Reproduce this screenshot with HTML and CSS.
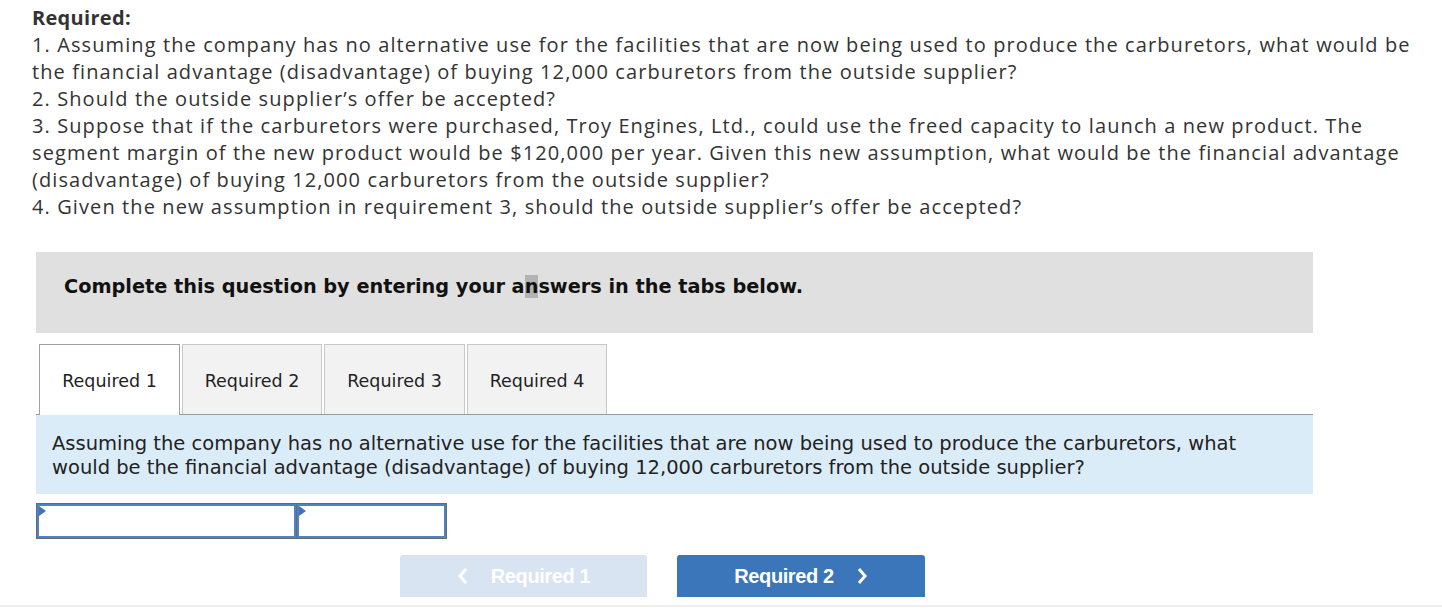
FILE: index.html
```html
<!DOCTYPE html>
<html>
<head>
<meta charset="utf-8">
<link rel="stylesheet" href="styles.css">
</head>
<body>
<div class="page">
  <div class="intro">
    <div class="req-title">Required:</div>
    <p class="req-text">1. Assuming the company has no alternative use for the facilities that are now being used to produce the carburetors, what would be<br>the financial advantage (disadvantage) of buying 12,000 carburetors from the outside supplier?<br>2. Should the outside supplier’s offer be accepted?<br>3. Suppose that if the carburetors were purchased, Troy Engines, Ltd., could use the freed capacity to launch a new product. The<br>segment margin of the new product would be $120,000 per year. Given this new assumption, what would be the financial advantage<br>(disadvantage) of buying 12,000 carburetors from the outside supplier?<br>4. Given the new assumption in requirement 3, should the outside supplier’s offer be accepted?</p>
  </div>

  <div class="instructions">Complete this question by entering your a<span class="sel">n</span>swers in the tabs below.</div>

  <div class="tabs">
    <div class="tab active">Required 1</div>
    <div class="tab">Required 2</div>
    <div class="tab">Required 3</div>
    <div class="tab">Required 4</div>
  </div>

  <div class="question">Assuming the company has no alternative use for the facilities that are now being used to produce the carburetors, what<br>would be the financial advantage (disadvantage) of buying 12,000 carburetors from the outside supplier?</div>

  <div class="answer-row">
    <div class="cell cell-wide"><span class="flag"></span></div>
    <div class="cell cell-narrow"><span class="flag"></span></div>
  </div>

  <div class="nav">
    <div class="btn btn-prev">
      <svg class="chev" width="12" height="18" viewBox="0 0 12 18"><path d="M9 2 L3 9 L9 16" fill="none" stroke="#ffffff" stroke-width="3"/></svg>
      <span>Required 1</span>
    </div>
    <div class="btn btn-next">
      <span>Required 2</span>
      <svg class="chev" width="12" height="18" viewBox="0 0 12 18"><path d="M3 2 L9 9 L3 16" fill="none" stroke="#ffffff" stroke-width="3"/></svg>
    </div>
  </div>
  <div class="footer-line"></div>
</div>
</body>
</html>
```
FILE: styles.css
```css
html, body {
  margin: 0;
  padding: 0;
  background: #ffffff;
}
.page {
  width: 1442px;
  height: 612px;
  overflow: hidden;
}
.intro {
  padding: 4px 0 0 32px;
  font-family: "Open Sans", "Noto Sans", sans-serif;
  font-size: 20px;
  letter-spacing: 1.1px;
  line-height: 27px;
  color: #333333;
  white-space: nowrap;
}
.req-title {
  font-weight: 700;
  letter-spacing: 0.3px;
}
.req-text {
  margin: 0;
}
.instructions {
  margin: 32px 0 0 36px;
  width: 1277px;
  height: 81px;
  box-sizing: border-box;
  padding: 23px 28px 0;
  background: #e0e0e0;
  font-family: "DejaVu Sans", Verdana, sans-serif;
  font-weight: 700;
  font-size: 19.3px;
  line-height: 24px;
  color: #111111;
  white-space: nowrap;
}
.sel {
  background: #b3b3b3;
}
.tabs {
  margin: 11px 0 0 36px;
  width: 1277px;
  display: flex;
  gap: 2px;
  padding-left: 3px;
  box-sizing: border-box;
  border-bottom: 1px solid #999999;
  height: 71px;
}
.tab {
  width: 141px;
  height: 70px;
  box-sizing: border-box;
  padding-top: 2px;
  border: 1px solid #c8c8c8;
  border-bottom: none;
  background: #f2f2f2;
  display: flex;
  align-items: center;
  justify-content: center;
  font-family: "DejaVu Sans", Verdana, sans-serif;
  font-size: 17.5px;
  color: #222222;
  white-space: nowrap;
}
.tab:nth-child(2n) {
  width: 140px;
}
.tab.active {
  background: #ffffff;
  border-color: #a0a0a0;
  height: 71px;
  position: relative;
  z-index: 1;
}
.question {
  margin-left: 36px;
  width: 1277px;
  box-sizing: border-box;
  height: 79px;
  padding: 17px 16px 0;
  background: #dbecf9;
  font-family: "DejaVu Sans", Verdana, sans-serif;
  font-size: 19.5px;
  line-height: 24px;
  color: #222222;
  white-space: nowrap;
}
.answer-row {
  margin: 9px 0 0 36px;
  width: 411px;
  height: 36px;
  box-sizing: border-box;
  border: 1px solid #6a6a6a;
  display: flex;
}
.cell {
  position: relative;
  height: 34px;
  box-sizing: border-box;
  border: 2px solid #4f82c4;
  background: #ffffff;
}
.cell-wide {
  width: 259px;
}
.cell-narrow {
  width: 150px;
  border-left: 1px solid #6a6a6a;
  box-shadow: inset 2px 0 0 #4f82c4;
}
.flag {
  position: absolute;
  left: 0;
  top: 0;
  width: 0;
  height: 0;
  border-top: 5px solid transparent;
  border-bottom: 5px solid transparent;
  border-left: 7px solid #3e74bb;
}
.cell-narrow .flag {
  left: 2px;
}
.nav {
  margin: 16px 0 0 400px;
  display: flex;
  gap: 30px;
}
.btn {
  width: 247px;
  height: 42px;
  border-radius: 3px 3px 0 0;
  display: flex;
  align-items: center;
  justify-content: center;
  gap: 22px;
  font-family: "Liberation Sans", Arial, sans-serif;
  font-weight: 700;
  font-size: 20px;
  letter-spacing: -0.4px;
  color: #ffffff;
}
.btn-prev {
  background: #d8e4f1;
}
.btn-next {
  width: 248px;
  background: #3a76b9;
}
.chev {
  display: block;
}
.footer-line {
  margin-top: 8px;
  height: 2px;
  background: #eeeeee;
}
```
